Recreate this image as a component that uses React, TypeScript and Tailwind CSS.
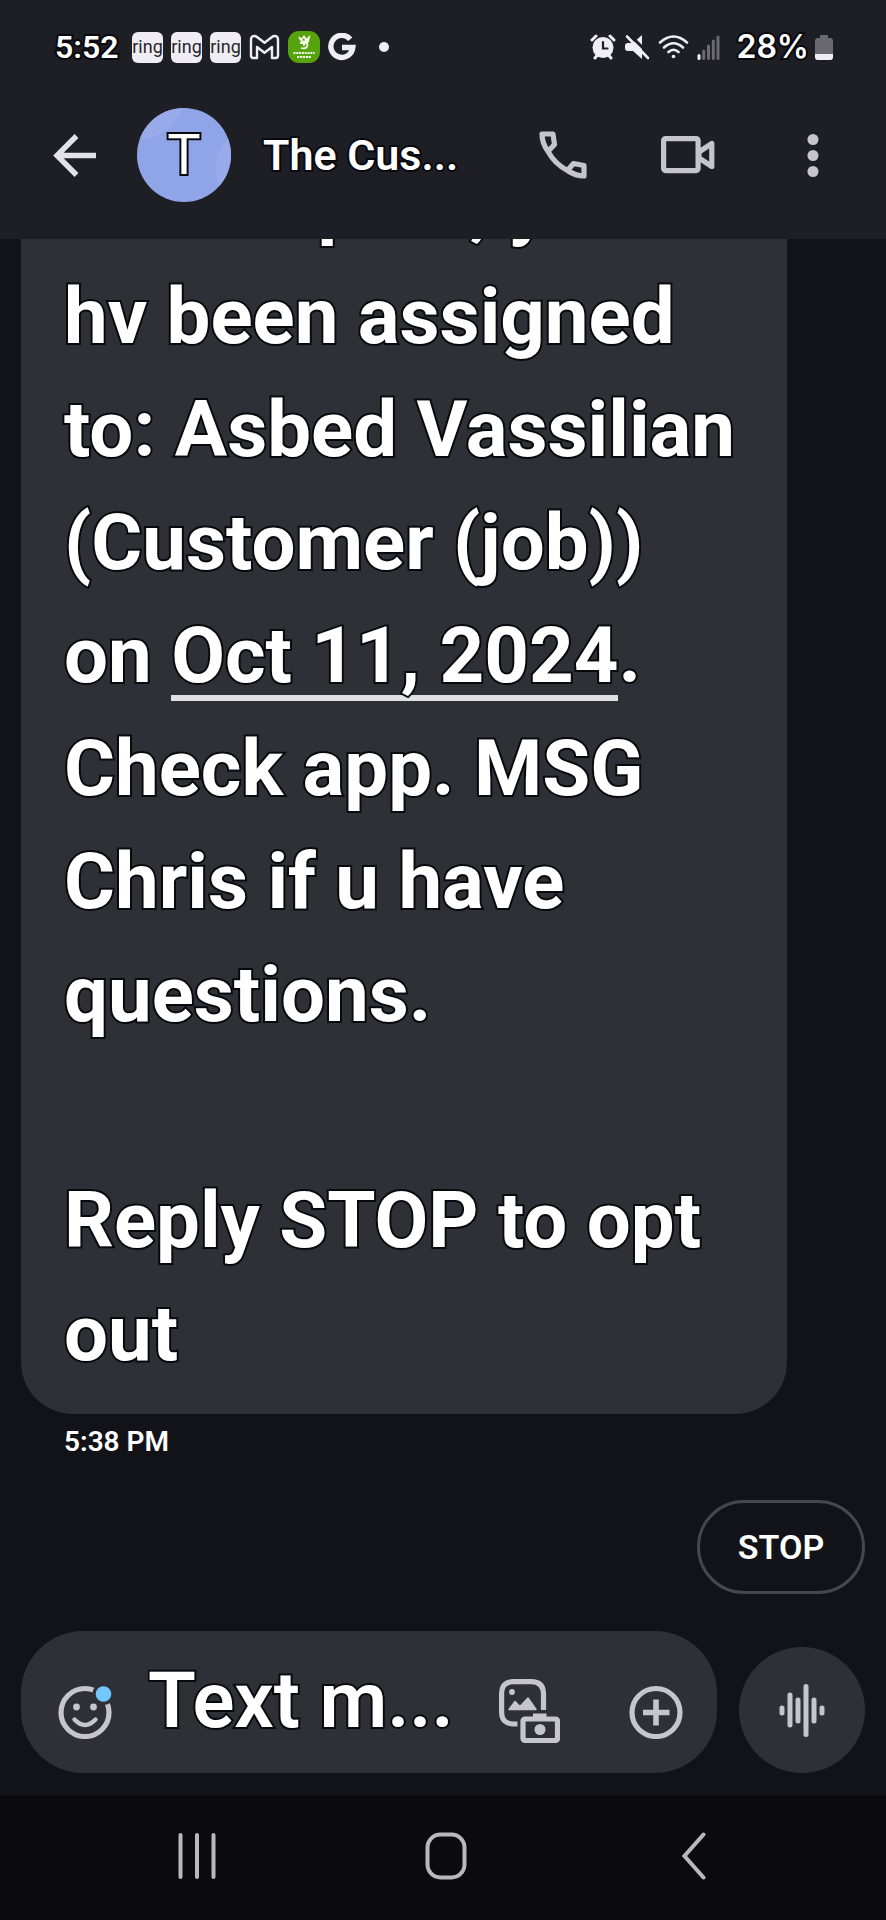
import type { ReactNode } from 'react';

const outline = '[-webkit-text-stroke:4px_#08080f] [paint-order:stroke_fill]';

const messageLines: ReactNode[] = [
  'Christopher, you',
  'hv been assigned',
  'to: Asbed Vassilian',
  '(Customer (job))',
  <>
    on{' '}
    <a href="#date" className="inline-block border-b-[6px] border-[#e0dfe4] leading-[78px]">
      Oct 11, 2024
    </a>
    .
  </>,
  'Check app. MSG',
  'Chris if u have',
  'questions.',
  '\u00a0',
  'Reply STOP to opt',
  'out',
];

function RingBadge() {
  return (
    <span className="flex h-[31px] w-[31px] items-center justify-center rounded-md bg-[#efedf3] text-[18px] leading-4 text-[#25252b]">
      ring
    </span>
  );
}

function GmailIcon() {
  return (
    <svg className="h-[26px] w-[31px]" viewBox="0 0 31 26" fill="none" stroke="#f0eef5" strokeWidth="2.4" strokeLinejoin="round">
      <path d="M2 5.5V21.5Q2 24 4.500 24H8V13L15.500 18.800 23 13V24H26.500Q29 24 29 21.500V5.500C29 2 25.500 1 23 3L15.500 8.800 8 3C5.500 1 2 2 2 5.500Z" />
    </svg>
  );
}

function GreenAppIcon() {
  return (
    <svg className="h-8 w-8" viewBox="0 0 32 32">
      <rect width="32" height="32" rx="11" fill="#56a30d" />
      <g fill="none" stroke="#f2fbe8" strokeWidth="1.8">
        <path d="M11 6l2 3 3-3.500 2 3.500 3-2.500-1 4h-7" />
        <path d="M12 12h7c1.500 5-2 6-6 5M16 11v4" />
      </g>
      <path d="M5.500 22h21" stroke="#f2fbe8" strokeWidth="2.200" strokeDasharray="2 0.800" />
      <path d="M9 26h14" stroke="#f2fbe8" strokeWidth="2.200" strokeDasharray="2.200 0.700" />
    </svg>
  );
}

function GoogleIcon() {
  return (
    <svg className="h-7 w-7" viewBox="0 0 28 28" fill="none" stroke="#f0eef5" strokeWidth="5.400">
      <path d="M22.300 6.300A11 11 0 1 0 24.800 14.500H14" />
    </svg>
  );
}

function AlarmIcon() {
  return (
    <svg className="h-[26px] w-[26px]" viewBox="0 0 26 26" fill="none" strokeLinecap="round">
      <path d="M2 6l4-4M24 6l-4-4M5 24l2.500-3M21 24l-2.500-3" stroke="#f0eef5" strokeWidth="3" />
      <circle cx="13" cy="13.500" r="10.500" fill="#f0eef5" />
      <path d="M13 8v6.500h4.500" stroke="#1e1f24" strokeWidth="2.200" />
    </svg>
  );
}

function MuteIcon() {
  return (
    <svg className="h-[26px] w-[26px]" viewBox="0 0 26 26" fill="#f0eef5">
      <path d="M1 12q0-3 3-3h5L18 1v24L9 17H4q-3 0-3-3z" />
      <path d="M4 -1L28 23" stroke="#1e1f24" strokeWidth="3" />
      <path d="M3 2.500L24 24" stroke="#f0eef5" strokeWidth="2.600" strokeLinecap="round" />
    </svg>
  );
}

function WifiIcon() {
  return (
    <svg className="h-[26px] w-[31px]" viewBox="0 0 31 26" fill="none" stroke="#f0eef5" strokeWidth="2.600" strokeLinecap="round">
      <path d="M2 8.500Q15.500-3.500 29 8.500M6 13.500Q15.500 5 25 13.500M10.500 18Q15.500 13.500 20.500 18" />
      <circle cx="15.500" cy="22.500" r="1.800" fill="#f0eef5" stroke="none" />
    </svg>
  );
}

function SignalIcon() {
  return (
    <svg className="h-[25px] w-[23px]" viewBox="0 0 23 25" strokeWidth="3" strokeLinecap="round">
      <path d="M2 20.500v3" stroke="#f0eef5" />
      <path d="M6.700 16v7.500M11.500 11v12.500M16.300 6v17.500M21 2v21.500" stroke="#69696f" />
    </svg>
  );
}

function BatteryIcon() {
  return (
    <svg className="h-[25px] w-[18px]" viewBox="0 0 18 25">
      <path d="M5 0h8v3h2q3 0 3 3v16q0 3-3 3H3q-3 0-3-3V6q0-3 3-3h2z" fill="#69696f" />
      <path d="M0 19h18v3q0 3-3 3H3q-3 0-3-3z" fill="#f0eef5" />
    </svg>
  );
}

function StatusBar() {
  return (
    <div className="flex h-[94px] items-center pl-[55px] pr-[53px] text-white">
      <span className={`w-[77px] text-[32px] font-semibold leading-10 ${outline}`}>5:52</span>
      <div className="flex items-center gap-2">
        <RingBadge />
        <RingBadge />
        <RingBadge />
        <GmailIcon />
        <GreenAppIcon />
        <GoogleIcon />
        <span className="ml-[15px] h-[10px] w-[10px] rounded-full bg-[#f0eef5]" />
      </div>
      <div className="ml-auto flex items-center gap-2">
        <AlarmIcon />
        <MuteIcon />
        <WifiIcon />
        <SignalIcon />
        <div className="ml-2 flex items-center gap-[6px]">
          <span className={`font-[Inter] text-[32px] font-semibold leading-10 ${outline}`}>28%</span>
          <BatteryIcon />
        </div>
      </div>
    </div>
  );
}

function ChatHeader() {
  return (
    <div className="flex h-[122px] items-center pl-[53px] pr-[67px] text-[#c6c5cc]">
      <button aria-label="Back">
        <svg className="h-11 w-11" viewBox="0 0 44 44" fill="none" stroke="#e2e2e8" strokeWidth="5.400">
          <path d="M23.500 3L4 22.500 23.500 42M4 22.500H43" />
        </svg>
      </button>
      <div className="relative ml-10 flex h-[94px] w-[94px] shrink-0 items-center justify-center overflow-hidden rounded-full bg-[#8fa5e7]">
        <span className="absolute -left-12 -top-16 h-24 w-24 rounded-full bg-[#98aaea]" />
        <span className="absolute -right-16 top-5 h-20 w-20 rounded-full bg-[#98aaea]" />
        <span className={`relative text-[56px] leading-none text-white ${outline}`}>T</span>
      </div>
      <h1 className={`ml-8 flex-1 whitespace-nowrap text-[43px] font-semibold leading-[56px] text-white ${outline}`}>
        The Cus...
      </h1>
      <button aria-label="Call">
        <svg className="h-12 w-12" viewBox="0 0 48 48" fill="none" stroke="currentColor" strokeWidth="5.200" strokeLinejoin="round">
          <path d="M3 3H14L15.500 13.500 9 20.500Q16 33 28.500 39.500L34.500 32.500 45 34.500V45Q36.500 45 28.500 39.500Q16 33 9 20.500Q3 12 3 3Z" />
        </svg>
      </button>
      <button aria-label="Video call" className="ml-[74px]">
        <svg className="h-12 w-[54px]" viewBox="0 0 54 48" fill="none" stroke="currentColor" strokeWidth="5.200" strokeLinejoin="round">
          <rect x="2.600" y="7.600" width="34.500" height="32" rx="2" />
          <path d="M38 21L50.800 12.500V35.500L38 27Z" />
        </svg>
      </button>
      <button aria-label="More options" className="ml-[92px]">
        <svg className="h-11 w-3" viewBox="0 0 12 44" fill="currentColor">
          <circle cx="6" cy="6.500" r="5.500" />
          <circle cx="6" cy="22.500" r="5.500" />
          <circle cx="6" cy="38.500" r="5.500" />
        </svg>
      </button>
    </div>
  );
}

function Composer() {
  return (
    <form className="flex shrink-0 items-end gap-[22px] pb-[22px] pl-[21px] pr-[21px] pt-[37px] text-[#c6c5cc]">
      <div className="flex h-[142px] min-w-0 flex-1 items-end rounded-[62px] bg-[#2f3035] pl-[37px] pr-[34px]">
        <button type="button" aria-label="Emoji" className="mb-[34px] shrink-0">
          <svg className="h-[54px] w-[54px]" viewBox="0 0 54 54" fill="none" stroke="currentColor">
            <circle cx="27" cy="27.500" r="24" strokeWidth="5.200" />
            <circle cx="18.500" cy="22" r="3.400" fill="currentColor" stroke="none" />
            <circle cx="35.500" cy="22" r="3.400" fill="currentColor" stroke="none" />
            <path d="M16.500 34.500Q27 45.500 37.500 34.500" strokeWidth="4.400" strokeLinecap="round" />
            <circle cx="45.500" cy="9" r="11" fill="#2f3035" stroke="none" />
            <circle cx="45.500" cy="9" r="7.800" fill="#72c7ff" stroke="none" />
          </svg>
        </button>
        <input
          aria-label="Text message"
          placeholder="Text m..."
          className={`ml-[36px] h-full min-w-0 flex-1 bg-transparent pb-1 text-[78px] font-semibold text-white outline-none placeholder:text-white ${outline}`}
        />
        <button type="button" aria-label="Gallery" className="mb-[30px] shrink-0">
          <svg className="h-[64px] w-[61px]" viewBox="0 0 61 64" fill="none" stroke="currentColor" strokeWidth="5.200">
            <path d="M18.500 45H15Q2.600 45 2.600 33V15Q2.600 2.600 15 2.600H32Q44.500 2.600 44.500 15V31" />
            <circle cx="13" cy="13" r="2.900" fill="currentColor" stroke="none" />
            <path d="M10 30.500L16 22.500 21 27.500 29 19 37 30.500Z" fill="currentColor" stroke="currentColor" strokeWidth="1.500" strokeLinejoin="round" />
            <rect x="24" y="40" width="34.500" height="21.500" rx="2" />
            <path d="M34 37h13.500" strokeWidth="5" />
            <circle cx="41" cy="50.500" r="5.500" fill="currentColor" stroke="none" />
          </svg>
        </button>
        <button type="button" aria-label="Add attachment" className="mb-[34px] ml-[69px] shrink-0">
          <svg className="h-[54px] w-[54px]" viewBox="0 0 54 54" fill="none" stroke="currentColor">
            <circle cx="27" cy="27.500" r="24" strokeWidth="5.200" />
            <path d="M14 27.500H40.500M27 14.500V40.500" strokeWidth="5.600" />
          </svg>
        </button>
      </div>
      <button type="button" aria-label="Record voice message" className="flex h-[126px] w-[126px] shrink-0 items-center justify-center rounded-full bg-[#2f3035]">
        <svg className="h-[54px] w-[46px]" viewBox="0 0 46 54" stroke="currentColor" strokeWidth="5" strokeLinecap="round">
          <path d="M3 25v5M11 12v30M19 17v21M27 3.500v48M35 17v21M43 25v5" />
        </svg>
      </button>
    </form>
  );
}

function NavBar() {
  return (
    <nav className="flex h-[125px] shrink-0 items-center justify-between bg-[#0a0a0f] pb-1 pl-[167px] pr-[162px] text-[#b9b8be]">
      <button aria-label="Recent apps" className="flex w-[60px] justify-center">
        <svg className="h-12 w-[38px]" viewBox="0 0 38 48" stroke="currentColor" strokeWidth="4" strokeLinecap="round">
          <path d="M2.500 3v42M19 3v42M35.500 3v42" />
        </svg>
      </button>
      <button aria-label="Home" className="flex w-[60px] justify-center">
        <svg className="h-12 w-[42px]" viewBox="0 0 42 48" fill="none" stroke="currentColor" strokeWidth="4">
          <rect x="2.500" y="2.500" width="37" height="43" rx="13" />
        </svg>
      </button>
      <button aria-label="Go back" className="flex w-[60px] justify-center">
        <svg className="h-12 w-6" viewBox="0 0 24 48" fill="none" stroke="currentColor" strokeWidth="4" strokeLinecap="round">
          <path d="M21.500 2.500L2.500 24 21.500 45.500" />
        </svg>
      </button>
    </nav>
  );
}

export default function App() {
  return (
    <div className="flex h-screen flex-col overflow-hidden bg-[#121318] font-[Roboto,sans-serif] text-white">
      <header className="shrink-0 bg-[#1e1f24] pb-[23px]">
        <StatusBar />
        <ChatHeader />
      </header>

      <main className="flex min-h-0 flex-1 flex-col justify-end overflow-hidden px-[21px]">
        <div className="mr-[78px] shrink-0 rounded-[52px] bg-[#2f3035] pb-6 pl-[43px]">
          {messageLines.map((line, i) => (
            <p key={i} className={`whitespace-nowrap text-[78px] font-bold leading-[113px] ${outline}`}>
              {line}
            </p>
          ))}
        </div>
        <time className="mt-[10px] shrink-0 pl-[43px] text-[28px] font-semibold leading-9">5:38 PM</time>
        <button className="mt-10 h-[94px] w-[168px] shrink-0 self-end rounded-full border-[3px] border-[#46474e] text-[34px] font-semibold">
          STOP
        </button>
      </main>

      <Composer />
      <NavBar />
    </div>
  );
}
